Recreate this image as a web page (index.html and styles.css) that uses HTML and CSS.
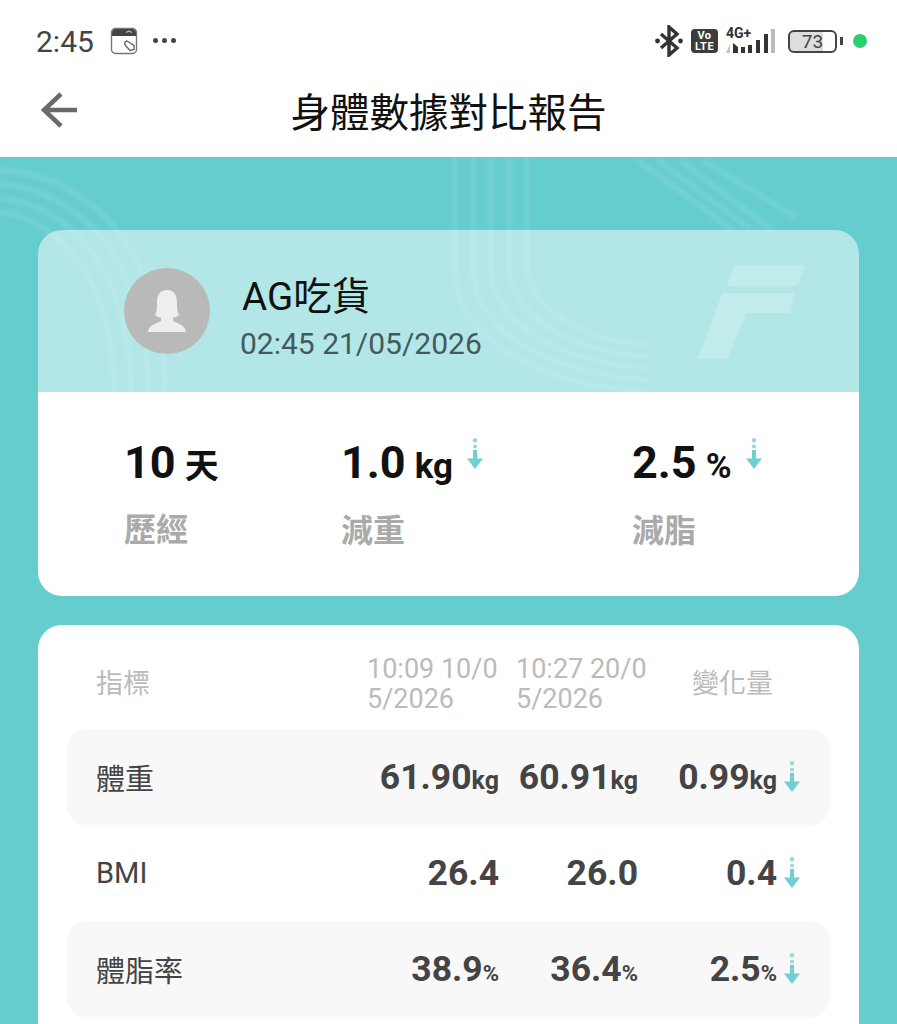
FILE: index.html
```html
<!DOCTYPE html>
<html lang="zh-Hant">
<head>
    <meta charset="UTF-8">
    <meta name="viewport" content="width=device-width, initial-scale=1.0">
    <title>身體數據對比報告</title>
    <link rel="stylesheet" href="styles.css">
</head>
<body>
    <svg width="0" height="0" class="defs">
        <symbol id="down" viewBox="0 0 16 32">
            <circle cx="8" cy="2.200" r="2.200" fill="#9bd6dc"/>
            <circle cx="8" cy="8.500" r="2" fill="#9bd6dc"/>
            <path d="M6 12h4v8.500h6L8 31 0 20.500h6z" fill="#6fd0d0"/>
        </symbol>
    </svg>

    <div class="status">
        <div class="status-left">
            <span class="time">2:45</span>
            <svg class="wallet" width="28" height="28" viewBox="0 0 28 28">
                <rect x="1.500" y="1.500" width="25" height="25" rx="4" fill="#fff" stroke="#777" stroke-width="1.400"/>
                <path d="M2 6a4 4 0 0 1 4-4h16a4 4 0 0 1 4 4v3H2z" fill="#444"/>
                <path d="M16 5.500l3-1.500 3 1.500" fill="none" stroke="#ddd" stroke-width="1"/>
                <path d="M17 14l7 4.500v4l-4 1-4.500-5a2.600 2.600 0 0 1 1.500-4.500z" fill="none" stroke="#666" stroke-width="1.400"/>
            </svg>
            <span class="dots"><i></i><i></i><i></i></span>
        </div>
        <div class="status-right">
            <svg width="28" height="32" viewBox="0 0 28 32">
                <path d="M6 9l16 14-8 7V2l8 7L6 23" fill="none" stroke="#333" stroke-width="3.400"/>
                <circle cx="2.500" cy="16" r="2.400" fill="#333"/>
                <circle cx="25.500" cy="16" r="2.400" fill="#333"/>
            </svg>
            <span class="volte">Vo<br>LTE</span>
            <span class="net">
                <span class="net-label">4G+</span>
                <svg width="50" height="24" viewBox="0 0 50 24">
                    <path d="M4 15v9H0zM4 17v7" fill="#c4c4c4"/>
                    <path d="M7 14l5 4v6H7z" fill="#333"/>
                    <rect x="15" y="18" width="4" height="6" fill="#333"/>
                    <rect x="22" y="16" width="4" height="8" fill="#333"/>
                    <rect x="30" y="11" width="4" height="13" fill="#333"/>
                    <rect x="38" y="5" width="4" height="19" fill="#333"/>
                    <rect x="45" y="0" width="4" height="24" fill="#bbb"/>
                </svg>
            </span>
            <span class="battery"><span class="battery-num">73</span></span>
            <span class="battery-tip"></span>
            <span class="green-dot"></span>
        </div>
    </div>

    <div class="nav">
        <svg class="back" width="37" height="36" viewBox="0 0 37 36">
            <path d="M20 2L3 18l17 16M3 18h33" fill="none" stroke="#6a6a6a" stroke-width="4.500"/>
        </svg>
        <h1>身體數據對比報告</h1>
    </div>

    <div class="main">
        <svg class="deco" width="897" height="867" viewBox="0 157 897 867">
            <g class="lines" fill="none" stroke="#fff" stroke-opacity=".07" stroke-width="7">
                <path d="M0 170C90 175 165 250 165 392"/>
                <path d="M0 184C80 190 148 260 148 392"/>
                <path d="M0 198C70 205 131 270 131 392"/>
                <path d="M0 212C60 220 114 280 114 392"/>
                <path d="M455 157V270C455 340 540 385 650 392"/>
                <path d="M473 157V270C473 330 550 375 650 380"/>
                <path d="M491 157V270C491 320 560 365 650 368"/>
                <path d="M509 157V270C509 310 570 355 650 356"/>
                <path d="M527 157V270C527 300 580 345 650 344"/>
                <path d="M637 160L733 230"/>
                <path d="M658 160L752 230"/>
                <path d="M680 160L772 230"/>
                <path d="M703 160L797 218"/>
            </g>
            <g fill="#fff" fill-opacity=".2">
                <path d="M734 265H805L798 286H727z"/>
                <path d="M722 293H795L790 313H747L727 359H698z"/>
            </g>
        </svg>

        <div class="card summary">
            <div class="profile">
                <svg class="avatar" width="86" height="86" viewBox="0 0 86 86">
                    <circle cx="43" cy="43" r="43" fill="#b9b9b9"/>
                    <path d="M33 34c0-8 4-12 10-12s10 4 10 12c0 5 0 9 2 13-2 2-5 2-6 3v3c3 2 13 4 13 11H24c0-7 10-9 13-11v-3c-1-1-4-1-6-3 2-4 2-8 2-13z" fill="#eee"/>
                </svg>
                <div class="who">
                    <div class="name">AG吃貨</div>
                    <div class="stamp">02:45 21/05/2026</div>
                </div>
            </div>
            <div class="stats">
                <div class="stat">
                    <div class="stat-value">10<span class="stat-unit cjk">天</span></div>
                    <div class="stat-label">歷經</div>
                </div>
                <div class="stat">
                    <div class="stat-value">1.0<span class="stat-unit">kg</span><svg class="stat-arrow" width="16" height="32"><use href="#down"/></svg></div>
                    <div class="stat-label">減重</div>
                </div>
                <div class="stat">
                    <div class="stat-value">2.5<span class="stat-unit">%</span><svg class="stat-arrow" width="16" height="32"><use href="#down"/></svg></div>
                    <div class="stat-label">減脂</div>
                </div>
            </div>
        </div>

        <div class="card report">
            <div class="thead">
                <div>指標</div>
                <div class="date">10:09 10/05/2026</div>
                <div class="date">10:27 20/05/2026</div>
                <div class="change">變化量</div>
            </div>
            <div class="row">
                <div class="label">體重</div>
                <div class="val">61.90<small>kg</small></div>
                <div class="val">60.91<small>kg</small></div>
                <div class="val">0.99<small>kg</small></div>
                <svg class="row-arrow" width="16" height="32"><use href="#down"/></svg>
            </div>
            <div class="row">
                <div class="label">BMI</div>
                <div class="val">26.4</div>
                <div class="val">26.0</div>
                <div class="val">0.4</div>
                <svg class="row-arrow" width="16" height="32"><use href="#down"/></svg>
            </div>
            <div class="row">
                <div class="label">體脂率</div>
                <div class="val">38.9<small class="pct">%</small></div>
                <div class="val">36.4<small class="pct">%</small></div>
                <div class="val">2.5<small class="pct">%</small></div>
                <svg class="row-arrow" width="16" height="32"><use href="#down"/></svg>
            </div>
        </div>
    </div>
</body>
</html>
```

FILE: styles.css
```css
* {
    margin: 0;
    padding: 0;
    box-sizing: border-box;
}

html,
body {
    width: 897px;
    height: 1024px;
    overflow: hidden;
    background: #fff;
    font-family: Roboto, "Noto Sans CJK TC", sans-serif;
}

.defs {
    display: block;
    height: 0;
}

/* status bar */
.status {
    height: 82px;
    padding: 0 30px 0 36px;
    display: flex;
    justify-content: space-between;
    align-items: center;
}

.status-left {
    display: flex;
    align-items: center;
}

.time {
    font-size: 30px;
    color: #444;
    width: 74px;
}

.wallet {
    display: block;
}

.dots {
    display: flex;
    gap: 4px;
    margin-left: 15px;
    margin-bottom: 2px;
}

.dots i {
    width: 5px;
    height: 5px;
    border-radius: 50%;
    background: #444;
}

.status-right {
    display: flex;
    align-items: center;
}

.volte {
    width: 27px;
    height: 24px;
    margin-left: 8px;
    border-radius: 4px;
    background: #3c3c3c;
    color: #fff;
    font-size: 11px;
    font-weight: 700;
    line-height: 11px;
    letter-spacing: .5px;
    text-align: center;
    padding-top: 1px;
}

.net {
    position: relative;
    width: 50px;
    height: 24px;
    margin-left: 8px;
}

.net-label {
    position: absolute;
    left: 0;
    top: -3px;
    font-size: 14px;
    font-weight: 700;
    line-height: 14px;
    color: #333;
}

.net svg {
    display: block;
}

.battery {
    width: 49px;
    height: 23px;
    margin-left: 12px;
    border: 2px solid #444;
    border-radius: 6px;
    background: linear-gradient(90deg, #ddd 73%, #fff 73%);
    display: flex;
    align-items: center;
    justify-content: center;
}

.battery-num {
    font-size: 19px;
    color: #444;
}

.battery-tip {
    width: 3px;
    height: 8px;
    margin-left: 3px;
    background: #444;
}

.green-dot {
    width: 14px;
    height: 14px;
    margin-left: 10px;
    border-radius: 50%;
    background: #2bcf6b;
}

/* title */
.nav {
    position: relative;
    height: 75px;
    padding-bottom: 20px;
    display: flex;
    justify-content: center;
    align-items: center;
}

.back {
    position: absolute;
    left: 41px;
    top: 10px;
}

.nav h1 {
    font-size: 39.500px;
    font-weight: 400;
    color: #111;
}

/* teal part */
.main {
    position: relative;
    height: 867px;
    padding: 73px 38px 0;
    background: #66cdcf;
    overflow: hidden;
}

.deco {
    position: absolute;
    left: 0;
    top: 0;
}

.lines {
    filter: blur(1px);
}

.card {
    position: relative;
    border-radius: 24px;
    overflow: hidden;
}

.summary {
    height: 366px;
}

.profile {
    height: 162px;
    padding-left: 86px;
    display: flex;
    align-items: center;
    background: rgba(255, 255, 255, .5);
}

.avatar {
    display: block;
}

.who {
    margin-left: 30px;
    margin-top: 16px;
}

.name {
    font-size: 38.500px;
    line-height: 46px;
    color: #111;
    margin-left: 2px;
}

.stamp {
    font-size: 30px;
    line-height: 40px;
    color: #45595c;
    margin-top: 4px;
}

.stats {
    height: 204px;
    padding: 44px 0 0 86px;
    background: #fff;
    display: grid;
    grid-template-columns: 217px 291px 1fr;
}

.stat-value {
    display: flex;
    align-items: baseline;
    font-size: 45px;
    font-weight: 700;
    line-height: 54px;
    color: #111;
}

.stat-unit {
    margin-left: 9px;
    font-size: 35px;
}

.stat-unit.cjk {
    font-size: 34px;
}

.stat-arrow {
    align-self: flex-start;
    margin: 2px 0 0 14px;
}

.stat-label {
    margin-top: 15px;
    font-size: 32px;
    font-weight: 700;
    line-height: 44px;
    color: #aaa;
}

/* table */
.report {
    margin-top: 29px;
    height: 399px;
    padding: 0 29px;
    background: #fff;
    border-radius: 24px 24px 0 0;
}

.thead {
    height: 104px;
    padding: 8px 0 0 29px;
    display: grid;
    grid-template-columns: 271px 149px 176px 90px;
    align-items: center;
    font-size: 27px;
    color: #bbb;
}

.date {
    font-size: 27px;
    line-height: 30px;
    width: 133px;
    margin-top: 6px;
    word-break: break-all;
}

.change {
    white-space: nowrap;
}

.row {
    height: 96px;
    padding-left: 29px;
    border-radius: 20px;
    display: grid;
    grid-template-columns: 264px 139px 139px 139px 16px;
    align-items: center;
}

.row:nth-child(even) {
    background: #f8f8f8;
}

.label {
    font-size: 29px;
    color: #444;
}

.val {
    text-align: right;
    font-size: 35.500px;
    font-weight: 700;
    color: #444;
    white-space: nowrap;
}

.val small {
    font-size: 25px;
}

.val small.pct {
    font-size: 22px;
}

.row-arrow {
    margin-left: 7px;
    margin-top: -1px;
}
```
